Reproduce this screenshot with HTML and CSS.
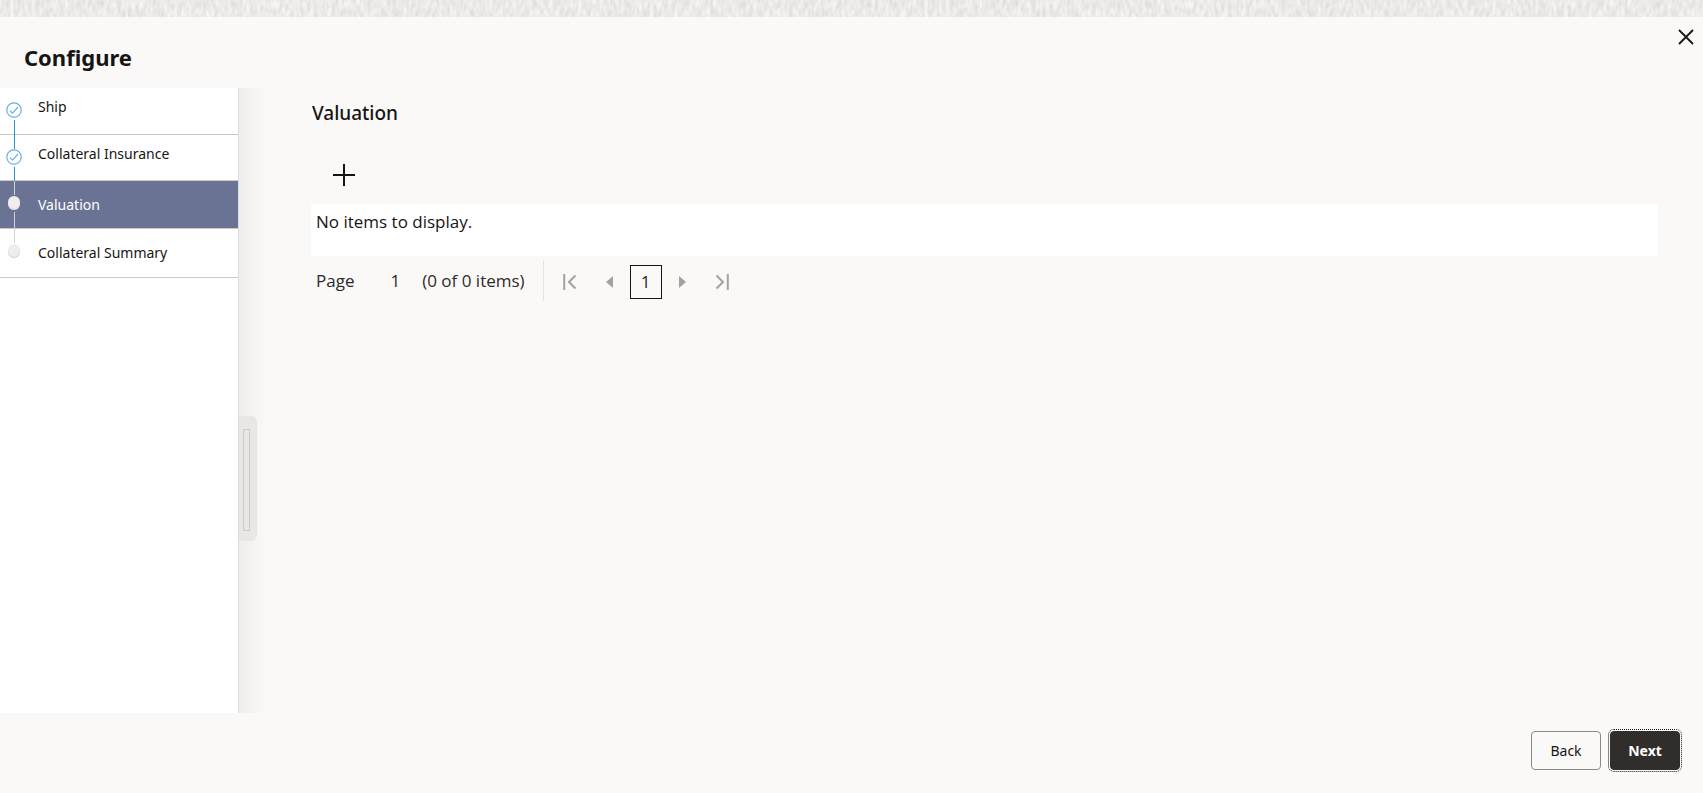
FILE: index.html
```html
<!DOCTYPE html>
<html lang="en">
<head>
<meta charset="utf-8">
<title>Configure</title>
<link rel="stylesheet" href="styles.css">
</head>
<body>
<div class="page">
  <svg class="texture" aria-hidden="true">
    <filter id="weave" x="0" y="0" width="100%" height="100%" color-interpolation-filters="sRGB">
      <feTurbulence type="fractalNoise" baseFrequency="0.28 0.11" numOctaves="2" seed="4"/>
      <feColorMatrix values="0.16 0 0 0 0.842  0.16 0 0 0 0.838  0.16 0 0 0 0.832  0 0 0 0 1"/>
    </filter>
    <rect width="100%" height="100%" filter="url(#weave)"/>
  </svg>
  <header class="header">
    <h1 class="title">Configure</h1>
    <button class="close" type="button" aria-label="Close">
      <svg width="16" height="16" viewBox="0 0 16 16"><path d="M1 1l14 14M15 1l-14 14" fill="none" stroke="#161513" stroke-width="1.8"/></svg>
    </button>
  </header>
  <div class="body">
    <nav class="sidebar">
      <ol class="steps">
        <li class="step done">
          <span class="track"><i class="lead hidden"></i><svg class="check" viewBox="0 0 16 16"><circle cx="8" cy="8" r="7.2"/><path d="M4 8.600l2.500 2.600 5.500-6.200"/></svg><i class="tail"></i></span>
          <a class="label" href="#">Ship</a>
        </li>
        <li class="step done">
          <span class="track"><i class="lead"></i><svg class="check" viewBox="0 0 16 16"><circle cx="8" cy="8" r="7.2"/><path d="M4 8.600l2.500 2.600 5.500-6.200"/></svg><i class="tail"></i></span>
          <a class="label" href="#">Collateral Insurance</a>
        </li>
        <li class="step current">
          <span class="track"><i class="lead"></i><i class="dot"></i><i class="tail"></i></span>
          <a class="label" href="#" aria-current="step">Valuation</a>
        </li>
        <li class="step">
          <span class="track"><i class="lead"></i><i class="dot"></i></span>
          <a class="label" href="#">Collateral Summary</a>
        </li>
      </ol>
    </nav>
    <div class="edge"><button class="handle" type="button" aria-label="Toggle panel"><span class="grip"></span></button></div>
    <main class="content">
      <h2 class="section-title">Valuation</h2>
      <button class="add" type="button" aria-label="Add">
        <svg width="22" height="22" viewBox="0 0 22 22"><path d="M11 0v22M0 11h22" fill="none" stroke="#161513" stroke-width="2"/></svg>
      </button>
      <div class="empty">No items to display.</div>
      <div class="pager">
        <span class="page-word">Page</span>
        <span class="page-number">1</span>
        <span class="page-count">(0 of 0 items)</span>
        <div class="page-nav">
          <button class="nav" type="button" aria-label="First page" disabled><svg width="14" height="16" viewBox="0 0 14 16"><path d="M1.200 0v16M12.500 1.500L6 8l6.500 6.500" fill="none" stroke="#a3a29f" stroke-width="2"/></svg></button>
          <button class="nav" type="button" aria-label="Previous page" disabled><svg width="7" height="12" viewBox="0 0 7 12"><path d="M7 0v12L0 6z" fill="#a3a29f"/></svg></button>
          <button class="nav current-page" type="button">1</button>
          <button class="nav" type="button" aria-label="Next page" disabled><svg width="7" height="12" viewBox="0 0 7 12"><path d="M0 0v12l7-6z" fill="#a3a29f"/></svg></button>
          <button class="nav" type="button" aria-label="Last page" disabled><svg width="14" height="16" viewBox="0 0 14 16"><path d="M12.800 0v16M1.500 1.500L8 8l-6.500 6.500" fill="none" stroke="#a3a29f" stroke-width="2"/></svg></button>
        </div>
      </div>
    </main>
  </div>
  <footer class="footer">
    <button class="btn" type="button">Back</button>
    <button class="btn primary" type="button">Next</button>
  </footer>
</div>
</body>
</html>
```
FILE: styles.css
```css
* { box-sizing: border-box; }
body {
  margin: 0;
  background: #fbf9f8;
  color: #161513;
  font-family: "Noto Sans", "Open Sans", sans-serif;
  font-size: 17px;
}
button { font: inherit; color: inherit; background: none; border: 0; padding: 0; cursor: pointer; }
h1, h2, ol { margin: 0; padding: 0; }
svg { display: block; }

.page { min-height: 100vh; display: flex; flex-direction: column; }
.texture { width: 100%; height: 17px; flex: none; }

.header { display: flex; justify-content: space-between; align-items: flex-start; height: 71px; padding: 12px 9px 0 24px; }
.title { font-size: 22px; line-height: 28px; font-weight: 700; padding-top: 14px; }

.body { flex: 1; display: flex; }
.sidebar { width: 239px; background: #fff; border-right: 1px solid #d5dde8; }
.steps { list-style: none; }
.step { display: flex; height: 49px; border-bottom: 1px solid #cac9c4; }
.step.done { height: 46px; }
.step.done:first-child { height: 47px; }
.step.current { height: 48px; background: #6b7394; color: #fff; }
.track { width: 28px; display: flex; flex-direction: column; align-items: center; margin-bottom: -1px; }
.lead, .tail { width: 1px; background: #d4d3d1; }
.lead { height: 14px; }
.hidden { visibility: hidden; }
.tail { flex: 1; margin-top: 2px; }
.done .lead, .done .tail { background: #1f98d1; }
.check { width: 16px; height: 16px; fill: none; stroke: #6ab0e2; stroke-width: 1.2; }
.dot { width: 12px; height: 14px; margin-top: 1px; border-radius: 6px; background: #efeeed; box-shadow: inset 0 -1px 1px #d5d3d1; }
.label { padding: 13px 0 0 10px; font-size: 14px; line-height: 22px; color: inherit; text-decoration: none; }
.done .label { padding-top: 8px; }

.edge { width: 32px; display: flex; align-items: center; background: linear-gradient(90deg, #efeeec, #fbf9f8 28px); }
.handle { display: flex; align-items: center; width: 18px; height: 125px; padding: 3px 0 0 4px; margin-top: 156px; border-radius: 0 6px 6px 0; background: #e8e7e5; }
.grip { width: 7px; height: 102px; border: 1px solid #cbcac8; }

.content { flex: 1; padding: 12px 45px 0 40px; }
.section-title { font-size: 19px; line-height: 26px; font-weight: 500; padding-left: 1px; }
.add { display: block; margin: 38px 0 0 22px; }
.empty, .pager { font-family: "Open Sans", sans-serif; line-height: 26px; }
.empty { margin-top: 18px; height: 52px; padding: 5px; background: #fff; }
.pager { display: flex; align-items: center; padding: 5px 5px 0; color: #2c2a28; }
.page-number { margin-left: 36px; }
.page-count { margin-left: 22px; }
.page-nav { display: flex; align-items: center; height: 40px; margin-left: 18px; padding: 2px 0 0 19px; border-left: 1px solid #e4e3e1; }
.nav { display: flex; justify-content: center; align-items: center; }
.nav + .nav { margin-left: 29px; }
.nav + .current-page, .current-page + .nav { margin-left: 17px; }
.current-page { width: 32px; height: 34px; border: 1px solid #161513; }

.footer { display: flex; justify-content: flex-end; gap: 9px; height: 80px; padding: 18px 23px 0 0; font-size: 14px; }
.btn { width: 70px; height: 39px; border: 1px solid #8b8987; border-radius: 4px; }
.primary { background: #312d2a; border-color: #312d2a; color: #fff; font-weight: 700; outline: 1px dotted #161513; outline-offset: 1px; }
```
